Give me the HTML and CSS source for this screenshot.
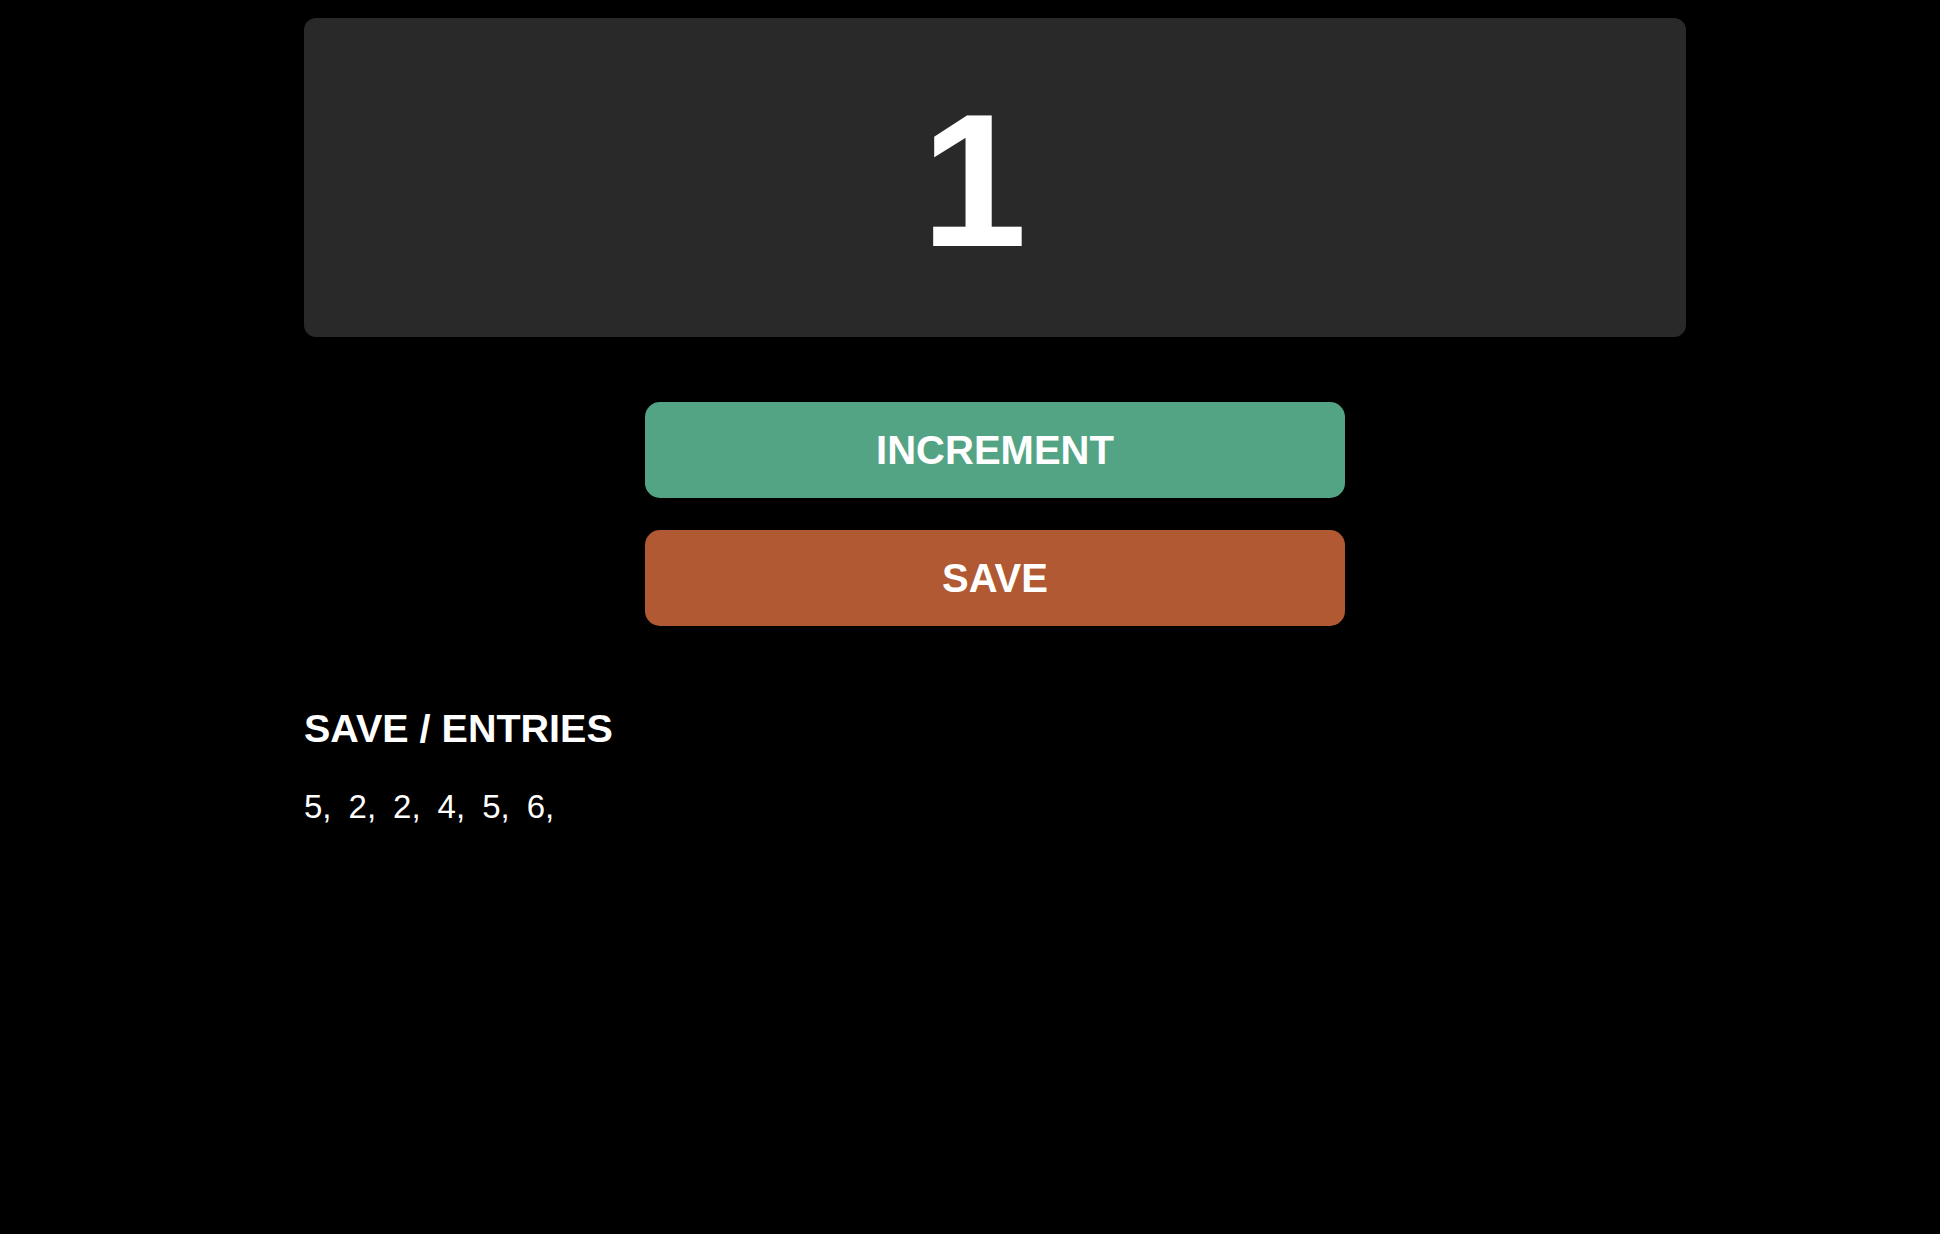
FILE: index.html
```html
<!DOCTYPE html>
<html lang="en">
<head>
<meta charset="utf-8">
<title>Counter</title>
<link rel="stylesheet" href="styles.css">
</head>
<body>
  <main class="app">
    <section class="display">
      <div class="count">1</div>
    </section>
    <div class="actions">
      <button class="btn btn-increment" type="button">INCREMENT</button>
      <button class="btn btn-save" type="button">SAVE</button>
    </div>
    <section class="saved">
      <h2 class="saved-title">SAVE / ENTRIES</h2>
      <div class="entries">
        <span class="entry">5,</span>
        <span class="entry">2,</span>
        <span class="entry">2,</span>
        <span class="entry">4,</span>
        <span class="entry">5,</span>
        <span class="entry">6,</span>
      </div>
    </section>
  </main>
</body>
</html>
```
FILE: styles.css
```css
html, body {
  margin: 0;
  padding: 0;
  background: #000;
}

body {
  width: 1940px;
  min-height: 1234px;
  font-family: "Liberation Sans", Arial, Helvetica, sans-serif;
  color: #fff;
}

.app {
  width: 1382px;
  margin: 18px 0 0 304px;
  display: flex;
  flex-direction: column;
}

.display {
  background: #292929;
  border-radius: 12px;
  padding: 63px 0 57px;
  text-align: center;
}

.count {
  font-size: 190px;
  font-weight: 700;
  line-height: 199px;
  padding-right: 42px;
}

.actions {
  margin-top: 65px;
  display: flex;
  flex-direction: column;
  align-items: center;
  gap: 32px;
}

.btn {
  width: 700px;
  height: 96px;
  border: none;
  border-radius: 15px;
  color: #fff;
  font-family: inherit;
  font-size: 40px;
  font-weight: 700;
  padding: 0;
  display: flex;
  align-items: center;
  justify-content: center;
  cursor: pointer;
}

.btn-increment {
  background: #53a485;
}

.btn-save {
  background: #b05932;
}

.saved {
  margin-top: 80px;
}

.saved-title {
  margin: 0;
  font-size: 39.5px;
  font-weight: 700;
  line-height: 45px;
}

.entries {
  margin-top: 37px;
  display: flex;
  gap: 17px;
  font-size: 33px;
  line-height: 38px;
}
```
